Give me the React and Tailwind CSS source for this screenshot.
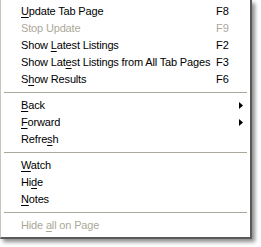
import React from "react";

// Context menu from a listings browser, classic Windows look.
const groups = [
  [
    { pre: "", key: "U", post: "pdate Tab Page", sc: "F8" },
    { pre: "Stop Update", key: "", post: "", sc: "F9", disabled: true },
    { pre: "Show ", key: "L", post: "atest Listings", sc: "F2" },
    { pre: "Show Lat", key: "e", post: "st Listings from All Tab Pages", sc: "F3" },
    { pre: "S", key: "h", post: "ow Results", sc: "F6" },
  ],
  [
    { pre: "", key: "B", post: "ack", sub: true },
    { pre: "", key: "F", post: "orward", sub: true },
    { pre: "Refre", key: "s", post: "h" },
  ],
  [
    { pre: "", key: "W", post: "atch" },
    { pre: "Hi", key: "d", post: "e" },
    { pre: "", key: "N", post: "otes" },
  ],
  [{ pre: "Hide ", key: "a", post: "ll on Page", disabled: true }],
];

function Row({ item }) {
  return (
    <div
      className={`flex h-[17px] items-center pl-[20px] ${
        item.disabled ? "text-[#aca899]" : "text-black"
      }`}
    >
      <span className="flex-1 whitespace-nowrap tracking-[-0.16px]">
        {item.pre}
        {item.key && <span className="underline underline-offset-2">{item.key}</span>}
        {item.post}
      </span>
      <span className="w-[34px] shrink-0 whitespace-nowrap">
        {item.sc}
        {item.sub && (
          <svg width="4" height="7" viewBox="0 0 4 7" className="ml-[23px]">
            <path d="M0 0L4 3.5L0 7Z" fill="#000" />
          </svg>
        )}
      </span>
    </div>
  );
}

export default function App() {
  return (
    <div className="h-[247px] w-[261px] bg-white">
      <div className="w-[252px] h-[239px] border-l border-l-[#c8c5bb] border-r-2 border-b-2 border-r-[#5a5a5a] border-b-[#5a5a5a] bg-white pt-[3px] shadow-[3px_3px_4px_rgba(0,0,0,0.45)] font-['Liberation_Sans',sans-serif] text-[11px]">
        {groups.map((g, i) => (
          <div key={i}>
            {i > 0 && (
              <div className="flex h-[9px] items-center px-[3px]">
                <div className="h-px w-full bg-[#aca899]" />
              </div>
            )}
            {g.map((item, j) => (
              <Row key={j} item={item} />
            ))}
          </div>
        ))}
      </div>
    </div>
  );
}
